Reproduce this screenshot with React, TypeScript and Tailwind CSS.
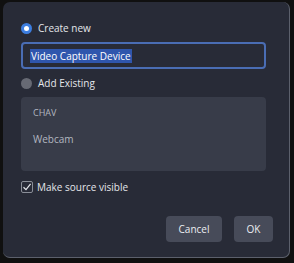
export default function App() {
    return (
        <div
            className="w-[294px] h-[263px] bg-[#101010] pl-[3px] pt-[2px] overflow-hidden"
            style={{ fontFamily: '"Open Sans", "Noto Sans", sans-serif' }}
        >
            <div className="w-[287px] h-[256px] bg-[#282b37] rounded-[7px] border-r border-b border-[#5c606c] pl-[18px] pr-[23px] pt-[18px] flex flex-col text-[10px] text-[#e4e6ea]">
                {/* Create new */}
                <label className="flex items-center gap-[6px] h-[16px]">
                    <span className="w-[11px] h-[11px] rounded-full bg-[#3d7ee0] flex items-center justify-center">
                        <span className="w-[5px] h-[5px] rounded-full bg-white" />
                    </span>
                    <span>Create new</span>
                </label>

                <div className="mt-[6px] h-[27px] w-[245px] rounded-[4px] border-2 border-[#4a6db4] flex items-center pl-[7px]">
                    <span className="bg-[#2f56ad] text-white leading-[14px] px-[1px]">Video Capture Device</span>
                </div>

                {/* Add existing */}
                <label className="mt-[6px] flex items-center gap-[6px] h-[16px]">
                    <span className="w-[11px] h-[11px] rounded-full bg-[#676a74]" />
                    <span>Add Existing</span>
                </label>

                <div className="mt-[6px] h-[74px] w-[245px] rounded-[4px] bg-[#383c49] pl-[12px] pt-[8px] text-[#b3b7c0] flex flex-col">
                    <div className="h-[16px] flex items-center text-[9px]">CHAV</div>
                    <div className="mt-[10px] h-[16px] flex items-center">Webcam</div>
                </div>

                {/* visible checkbox */}
                <label className="mt-[9px] flex items-center gap-[4px] h-[14px]">
                    <span className="w-[12px] h-[12px] border border-[#8a8e98] rounded-[2px] flex items-center justify-center">
                        <svg width="10" height="10" viewBox="0 0 10 10">
                            <path d="M1.5 5.2 L4 7.6 L8.6 1.8" stroke="#e4e6ea" strokeWidth="1.2" fill="none" />
                        </svg>
                    </span>
                    <span>Make source visible</span>
                </label>

                <div className="mt-[22px] flex justify-end gap-[12px] mr-[-7px]">
                    <button className="w-[56px] h-[26px] rounded-[4px] bg-[#474b59] text-[#eceef2]">Cancel</button>
                    <button className="w-[39px] h-[26px] rounded-[4px] bg-[#474b59] text-[#eceef2]">OK</button>
                </div>
            </div>
        </div>
    );
}
